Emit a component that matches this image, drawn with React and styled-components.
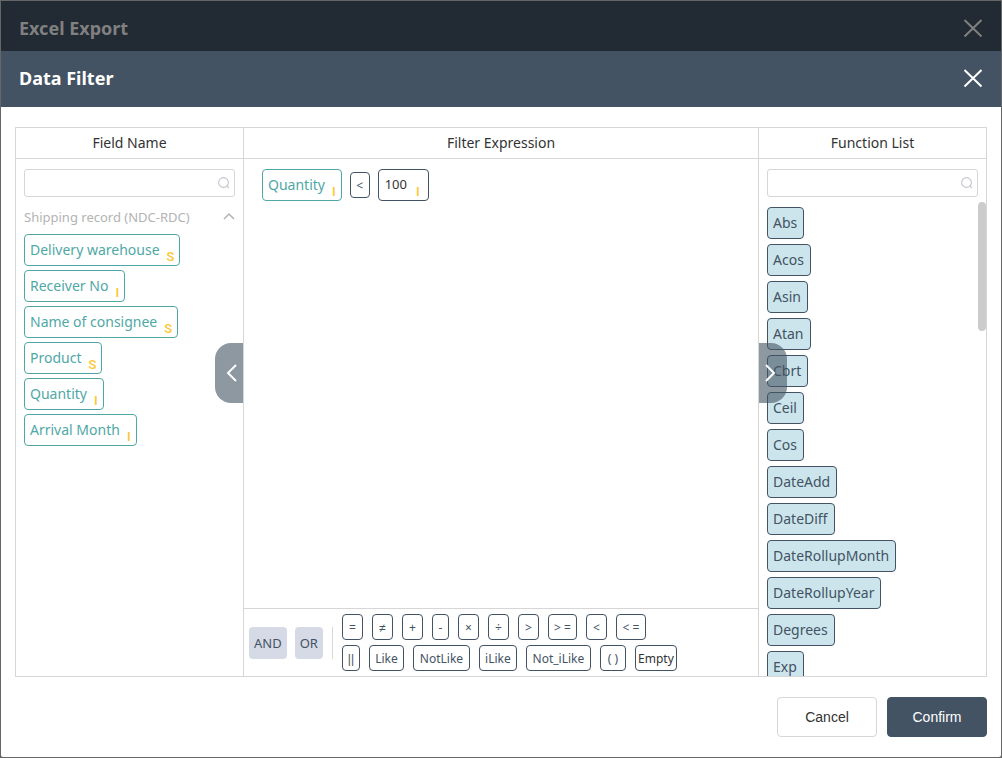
import React, {useState} from 'react';
import styled, {createGlobalStyle} from 'styled-components';

const GlobalStyle = createGlobalStyle`
  * {
    box-sizing: border-box;
  }
  body {
    margin: 0;
    background: #666;
    font-family: 'Noto Sans', 'Open Sans', sans-serif;
    font-size: 14px;
    color: #333;
  }
  button, input {
    font-family: inherit;
    margin: 0;
  }
`;

const Page = styled.div`
  height: 100vh;
  padding: 1px;
  display: flex;
  flex-direction: column;
`;
const TitleBar = styled.header`
  flex: none;
  display: flex;
  align-items: center;
  justify-content: space-between;
  height: ${(props) => (props.$dimmed ? '50px' : '56px')};
  padding: ${(props) => (props.$dimmed ? '4px 18px 0' : '0 18px 2px')};
  background: ${(props) => (props.$dimmed ? '#222a33' : '#435363')};
  color: ${(props) => (props.$dimmed ? '#808080' : '#fff')};
`;
const Title = styled.h2`
  margin: 0;
  font-size: 18px;
  line-height: 24px;
  font-weight: 700;
`;
const CloseButton = styled.button`
  display: flex;
  padding: 0;
  border: 0;
  background: none;
  color: inherit;
  cursor: pointer;
`;
const Dialog = styled.main`
  flex: 1;
  min-height: 0;
  display: flex;
  flex-direction: column;
  padding: 20px 14px;
  background: #fff;
  border-radius: 0 0 2px 2px;
`;
const Panels = styled.div`
  flex: 1;
  min-height: 0;
  display: grid;
  grid-template-columns: 228px 1fr 227px;
  border: 1px solid #d6d6d6;
`;
const Panel = styled.section`
  position: relative;
  min-width: 0;
  min-height: 0;
  display: flex;
  flex-direction: column;
  border-right: ${(props) => (props.$last ? '0' : '1px solid #d6d6d6')};
`;
const PanelTitle = styled.h3`
  flex: none;
  margin: 0;
  height: 31px;
  line-height: 30px;
  border-bottom: 1px solid #d6d6d6;
  font-size: 14px;
  font-weight: 400;
  text-align: center;
`;
const SearchBox = styled.label`
  flex: none;
  display: flex;
  align-items: center;
  height: 28px;
  margin: 10px 8px 0;
  padding-right: 4px;
  border: 1px solid #d6d6d6;
  border-radius: 3px;
`;
const SearchInput = styled.input`
  flex: 1;
  min-width: 0;
  height: 100%;
  padding: 0 8px;
  border: 0;
  outline: 0;
  background: none;
`;
const Group = styled.button`
  flex: none;
  display: flex;
  align-items: center;
  justify-content: space-between;
  height: 28px;
  margin-top: 6px;
  padding: 0 8px;
  border: 0;
  background: none;
  color: #b3b3b3;
  font-size: 13px;
`;
const FieldList = styled.div`
  display: flex;
  flex-direction: column;
  align-items: flex-start;
  gap: 4px;
  margin-top: 3px;
  padding: 0 8px;
`;
const Chip = styled.button`
  flex: none;
  display: flex;
  align-items: center;
  gap: 7px;
  height: 32px;
  padding: 0 5px 2px;
  border: 1px solid #4fa8a6;
  border-radius: 4px;
  background: #fff;
  color: #4fa8a6;
  font-size: 14px;
`;
const TypeMark = styled.span`
  align-self: flex-end;
  font-family: Roboto, sans-serif;
  font-size: 13px;
  font-weight: 500;
  line-height: 13px;
  color: #fbc72d;
`;
const FunctionChip = styled(Chip)`
  padding-right: 6px;
  border-color: #435363;
  background: #cce5ec;
  color: #435363;
`;
const FunctionArea = styled.div`
  position: relative;
  flex: 1;
  min-height: 0;
  margin-top: 5px;
`;
const FunctionList = styled.div`
  height: 100%;
  display: flex;
  flex-direction: column;
  align-items: flex-start;
  gap: 5px;
  padding: 5px 8px;
  overflow: hidden;
`;
const ScrollThumb = styled.div`
  position: absolute;
  top: 0;
  right: 0;
  width: 8px;
  height: 129px;
  border-radius: 4px;
  background: #ccc;
`;
const Toggle = styled.button`
  position: absolute;
  top: 215px;
  ${(props) => (props.$side === 'left' ? 'right: 0;' : 'left: 0;')}
  display: flex;
  align-items: center;
  justify-content: ${(props) => (props.$side === 'left' ? 'flex-end' : 'flex-start')};
  width: 28px;
  height: 60px;
  padding: 0 5px;
  border: 0;
  border-radius: ${(props) => (props.$side === 'left' ? '16px 0 0 16px' : '0 16px 16px 0')};
  background: rgba(67, 83, 99, 0.6);
  color: #fff;
`;
const Canvas = styled.div`
  flex: 1;
  display: flex;
  align-items: flex-start;
  align-content: flex-start;
  flex-wrap: wrap;
  gap: 8px;
  padding: 10px 18px;
`;
const ValueChip = styled.label`
  display: flex;
  align-items: center;
  width: 51px;
  height: 32px;
  padding: 0 8px 2px 6px;
  border: 1px solid #435363;
  border-radius: 4px;
`;
const ValueInput = styled.input`
  flex: 1;
  min-width: 0;
  padding: 0;
  border: 0;
  outline: 0;
  background: none;
  color: #333;
  font-size: 13px;
`;
const Operators = styled.div`
  flex: none;
  display: flex;
  align-items: center;
  height: 68px;
  padding: 0 5px;
  border-top: 1px solid #d6d6d6;
`;
const LogicButton = styled.button`
  height: 32px;
  margin-right: 8px;
  padding: 0 5px;
  border: 0;
  border-radius: 4px;
  background: #d6dae6;
  color: #435363;
  font-size: 13px;
`;
const Divider = styled.div`
  width: 1px;
  height: 32px;
  margin: 0 9px 0 1px;
  background: #d6d6d6;
`;
const OperatorRows = styled.div`
  display: flex;
  flex-direction: column;
  gap: 5px;
`;
const OperatorRow = styled.div`
  display: flex;
  gap: 9px;
`;
const OperatorButton = styled.button`
  height: 26px;
  min-width: ${(props) => props.$width || 20}px;
  margin-top: ${(props) => (props.$inline ? '3px' : '0')};
  padding: 2px 0 0;
  border: 1px solid #435363;
  border-radius: 4px;
  background: #fff;
  color: ${(props) => (props.$dark ? '#333' : '#435363')};
  font-family: ${(props) => (props.$plain ? "'Liberation Sans', Arial, sans-serif" : 'inherit')};
  font-size: 12px;
  line-height: 22px;
`;
const Footer = styled.footer`
  flex: none;
  display: flex;
  justify-content: flex-end;
  gap: 10px;
  padding-top: 20px;
`;
const FooterButton = styled.button`
  width: 100px;
  height: 40px;
  border: 1px solid ${(props) => (props.$primary ? '#435363' : '#d6d6d6')};
  border-radius: 4px;
  background: ${(props) => (props.$primary ? '#435363' : '#fff')};
  color: ${(props) => (props.$primary ? '#fff' : '#333')};
  && {
    font-family: 'Liberation Sans', Arial, sans-serif;
  }
  font-size: 14px;
`;

const fields = [
  {name: 'Delivery warehouse', type: 'S'},
  {name: 'Receiver No', type: 'I'},
  {name: 'Name of consignee', type: 'S'},
  {name: 'Product', type: 'S'},
  {name: 'Quantity', type: 'I'},
  {name: 'Arrival Month', type: 'I'},
];

const functions = [
  'Abs',
  'Acos',
  'Asin',
  'Atan',
  'Cbrt',
  'Ceil',
  'Cos',
  'DateAdd',
  'DateDiff',
  'DateRollupMonth',
  'DateRollupYear',
  'Degrees',
  'Exp',
];

const symbols = [
  {label: '=', width: 21},
  {label: '≠', width: 21, plain: true},
  {label: '+', width: 21},
  {label: '-', width: 17},
  {label: '×', width: 21},
  {label: '÷', width: 21},
  {label: '>', width: 21},
  {label: '> =', width: 29},
  {label: '<', width: 21},
  {label: '< =', width: 30},
];

const keywords = [
  {label: '||', width: 18, plain: true},
  {label: 'Like', width: 35},
  {label: 'NotLike', width: 57},
  {label: 'iLike', width: 38},
  {label: 'Not_iLike', width: 65},
  {label: '( )', width: 26},
  {label: 'Empty', width: 42, dark: true},
];

const CloseIcon = () => (
  <svg width="20" height="20" viewBox="0 0 20 20" fill="none" stroke="currentColor" strokeWidth="2">
    <path d="M1.5 2L18.5 18.5M18.5 2L1.5 18.5" />
  </svg>
);

const SearchIcon = () => (
  <svg width="12" height="14" viewBox="0 0 12 14" fill="none" stroke="#c3c6cf" strokeWidth="1.1">
    <circle cx="5.5" cy="6.5" r="4.9" />
    <path d="M8.8 9.8L11 12" />
  </svg>
);

const Chevron = ({points, width, height, strokeWidth}) => (
  <svg width={width} height={height} fill="none" stroke="currentColor" strokeWidth={strokeWidth}>
    <polyline points={points} />
  </svg>
);

const Search = ({label}) => {
  const [value, setValue] = useState('');
  return (
    <SearchBox>
      <SearchInput aria-label={label} value={value} onChange={(e) => setValue(e.target.value)} />
      <SearchIcon />
    </SearchBox>
  );
};

const Field = ({name, type}) => (
  <Chip type="button">
    {name}
    <TypeMark>{type}</TypeMark>
  </Chip>
);

const OperatorList = ({items}) => (
  <OperatorRow>
    {items.map(({label, width, dark, plain}) => (
      <OperatorButton key={label} type="button" $width={width} $dark={dark} $plain={plain}>
        {label}
      </OperatorButton>
    ))}
  </OperatorRow>
);

const App = () => {
  const [amount, setAmount] = useState('100');

  return (
    <Page>
      <GlobalStyle />
      <TitleBar $dimmed>
        <Title>Excel Export</Title>
        <CloseButton type="button" aria-label="Close export">
          <CloseIcon />
        </CloseButton>
      </TitleBar>
      <TitleBar>
        <Title>Data Filter</Title>
        <CloseButton type="button" aria-label="Close filter">
          <CloseIcon />
        </CloseButton>
      </TitleBar>
      <Dialog>
        <Panels>
          <Panel>
            <PanelTitle>Field Name</PanelTitle>
            <Search label="Search fields" />
            <Group type="button">
              Shipping record (NDC-RDC)
              <Chevron width={12} height={10} points="1,7 6,2 11,7" strokeWidth={1.5} />
            </Group>
            <FieldList>
              {fields.map((field) => (
                <Field key={field.name} name={field.name} type={field.type} />
              ))}
            </FieldList>
            <Toggle type="button" $side="left" aria-label="Collapse fields">
              <Chevron width={12} height={18} points="10,1 2,9 10,17" strokeWidth={2} />
            </Toggle>
          </Panel>
          <Panel>
            <PanelTitle>Filter Expression</PanelTitle>
            <Canvas>
              <Field name="Quantity" type="I" />
              <OperatorButton type="button" $inline>
                &lt;
              </OperatorButton>
              <ValueChip>
                <ValueInput aria-label="Value" value={amount} onChange={(e) => setAmount(e.target.value)} />
                <TypeMark>I</TypeMark>
              </ValueChip>
            </Canvas>
            <Operators>
              <LogicButton type="button">AND</LogicButton>
              <LogicButton type="button">OR</LogicButton>
              <Divider />
              <OperatorRows>
                <OperatorList items={symbols} />
                <OperatorList items={keywords} />
              </OperatorRows>
            </Operators>
          </Panel>
          <Panel $last>
            <PanelTitle>Function List</PanelTitle>
            <Search label="Search functions" />
            <FunctionArea>
              <FunctionList>
                {functions.map((name) => (
                  <FunctionChip key={name} type="button">
                    {name}
                  </FunctionChip>
                ))}
              </FunctionList>
              <ScrollThumb />
            </FunctionArea>
            <Toggle type="button" $side="right" aria-label="Collapse functions">
              <Chevron width={12} height={18} points="2,1 10,9 2,17" strokeWidth={2} />
            </Toggle>
          </Panel>
        </Panels>
        <Footer>
          <FooterButton type="button">Cancel</FooterButton>
          <FooterButton type="button" $primary>
            Confirm
          </FooterButton>
        </Footer>
      </Dialog>
    </Page>
  );
};

export default App;
